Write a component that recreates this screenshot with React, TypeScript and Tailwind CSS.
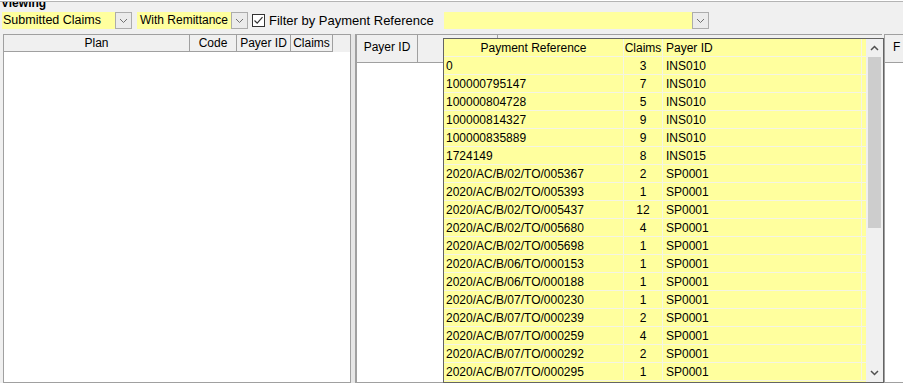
import React from "react";

const rows: [string, string, string][] = [
  ["0", "3", "INS010"],
  ["100000795147", "7", "INS010"],
  ["100000804728", "5", "INS010"],
  ["100000814327", "9", "INS010"],
  ["100000835889", "9", "INS010"],
  ["1724149", "8", "INS015"],
  ["2020/AC/B/02/TO/005367", "2", "SP0001"],
  ["2020/AC/B/02/TO/005393", "1", "SP0001"],
  ["2020/AC/B/02/TO/005437", "12", "SP0001"],
  ["2020/AC/B/02/TO/005680", "4", "SP0001"],
  ["2020/AC/B/02/TO/005698", "1", "SP0001"],
  ["2020/AC/B/06/TO/000153", "1", "SP0001"],
  ["2020/AC/B/06/TO/000188", "1", "SP0001"],
  ["2020/AC/B/07/TO/000230", "1", "SP0001"],
  ["2020/AC/B/07/TO/000239", "2", "SP0001"],
  ["2020/AC/B/07/TO/000259", "4", "SP0001"],
  ["2020/AC/B/07/TO/000292", "2", "SP0001"],
  ["2020/AC/B/07/TO/000295", "1", "SP0001"],
];

const ChevronDown = ({ dark }: { dark?: boolean }) => (
  <svg width="9" height="6" viewBox="0 0 9 6" fill="none">
    <path
      d="M1 1 L4.5 4.5 L8 1"
      stroke={dark ? "#505050" : "#707070"}
      strokeWidth={dark ? 1.5 : 1}
    />
  </svg>
);

const ChevronUp = () => (
  <svg width="9" height="6" viewBox="0 0 9 6" fill="none">
    <path d="M1 5 L4.5 1.5 L8 5" stroke="#505050" strokeWidth="1.5" />
  </svg>
);

const ComboButton = () => (
  <div className="w-[17px] border border-[#acacac] bg-[#ebebeb] flex items-center justify-center">
    <ChevronDown />
  </div>
);

const App: React.FC = () => {
  return (
    <div className="relative w-[903px] h-[387px] overflow-hidden bg-white font-['Liberation_Sans',Arial,sans-serif] text-[12px] text-black">
      <div className="pt-[1px]">
        <div className="h-[382px] border-t border-[#b4b4b4] bg-[#f0f0f0] flex flex-col">
          {/* group title, cut off at the top */}
          <div className="h-[10px] overflow-hidden pl-[1px]">
            <div className="-mt-[6px] leading-[14px] font-bold text-[12px]">Viewing</div>
          </div>

          {/* filter row */}
          <div className="h-[17px] flex pl-[2px]">
            <div className="w-[113px] bg-[#ffff9e] pl-[1px] leading-[17px] text-[12.5px]">
              Submitted Claims
            </div>
            <ComboButton />
            <div className="w-[94px] ml-[5px] bg-[#ffff9e] pl-[3px] leading-[17px] text-[12px] whitespace-nowrap">
              With Remittance
            </div>
            <ComboButton />
            <div className="ml-[4px] flex items-center">
              <div className="w-[13px] h-[13px] border border-[#333333] bg-white flex items-center justify-center">
                <svg width="11" height="11" viewBox="0 0 11 11" fill="none">
                  <path d="M1.5 5.5 L4.2 8.2 L9.5 2.2" stroke="#333333" strokeWidth="1.2" />
                </svg>
              </div>
            </div>
            <div className="ml-[4px] text-[13px] leading-[17px] whitespace-nowrap">
              Filter by Payment Reference
            </div>
            <div className="w-[248px] ml-[10px] bg-[#ffff9e]" />
            <ComboButton />
          </div>

          {/* tables */}
          <div className="mt-[5px] flex flex-1 pl-[3px]">
            <div className="w-[348px] border border-[#a0a0a0] bg-white flex flex-col">
              <div className="h-[17px] flex bg-[#f0f0f0] leading-[16px]">
                <div className="w-[186px] text-center border-r border-b border-[#a0a0a0]">Plan</div>
                <div className="w-[47px] text-center border-r border-b border-[#a0a0a0]">Code</div>
                <div className="w-[54px] text-center border-r border-b border-[#a0a0a0]">Payer ID</div>
                <div className="w-[42px] text-center border-r border-b border-[#a0a0a0]">Claims</div>
                <div className="flex-1" />
              </div>
              <div className="flex-1 bg-white" />
            </div>
            <div className="w-[4px] bg-[#e6e6e6]" />
            <div className="w-[527px] border-l-2 border-[#a0a0a0] border-b bg-white flex flex-col">
              <div className="h-[29px] flex bg-[#f0f0f0] border-t border-[#a0a0a0] leading-[24px]">
                <div className="w-[61px] text-center border-r border-b border-[#a0a0a0]">Payer ID</div>
                <div className="w-[80px] border-r border-b border-[#a0a0a0]" />
                <div className="flex-1" />
              </div>
              <div className="flex-1" />
            </div>
            <div className="w-[2px]" />
            <div className="flex-1 border-l border-t border-b border-[#a0a0a0] bg-white flex flex-col">
              <div className="h-[28px] bg-[#f0f0f0] border-b border-[#a0a0a0] overflow-hidden pl-[8px] leading-[24px] whitespace-nowrap">
                F
              </div>
              <div className="flex-1" />
            </div>
          </div>
        </div>
      </div>

      {/* open payment reference dropdown */}
      <div className="absolute left-[443px] top-[38px] w-[441px] h-[345px] border border-[#646464] bg-[#ffff9e] flex">
        <div className="w-[422px] flex flex-col">
          <div className="h-[18px] flex border-b border-[#f4f4e4] leading-[18px]">
            <div className="w-[180px] text-center border-r border-[#f4f4e4]">Payment Reference</div>
            <div className="w-[39px] text-center border-r border-[#f4f4e4]">Claims</div>
            <div className="w-[199px] pl-[3px] border-r border-[#f4f4e4]">Payer ID</div>
          </div>
          {rows.map(([ref, claims, payer]) => (
            <div key={ref} className="h-[18px] flex border-b border-[#f4f4e4] leading-[18px]">
              <div className="w-[180px] pl-[2px] border-r border-[#f4f4e4] whitespace-nowrap">{ref}</div>
              <div className="w-[39px] text-center border-r border-[#f4f4e4]">{claims}</div>
              <div className="w-[199px] pl-[3px] border-r border-[#f4f4e4]">{payer}</div>
            </div>
          ))}
        </div>
        <div className="flex-1 bg-[#f0f0f0] flex flex-col">
          <div className="h-[18px] flex items-center justify-center">
            <ChevronUp />
          </div>
          <div className="h-[171px] mx-[2px] bg-[#cdcdcd]" />
          <div className="flex-1" />
          <div className="h-[18px] flex items-center justify-center">
            <ChevronDown dark />
          </div>
        </div>
      </div>
    </div>
  );
};

export default App;
